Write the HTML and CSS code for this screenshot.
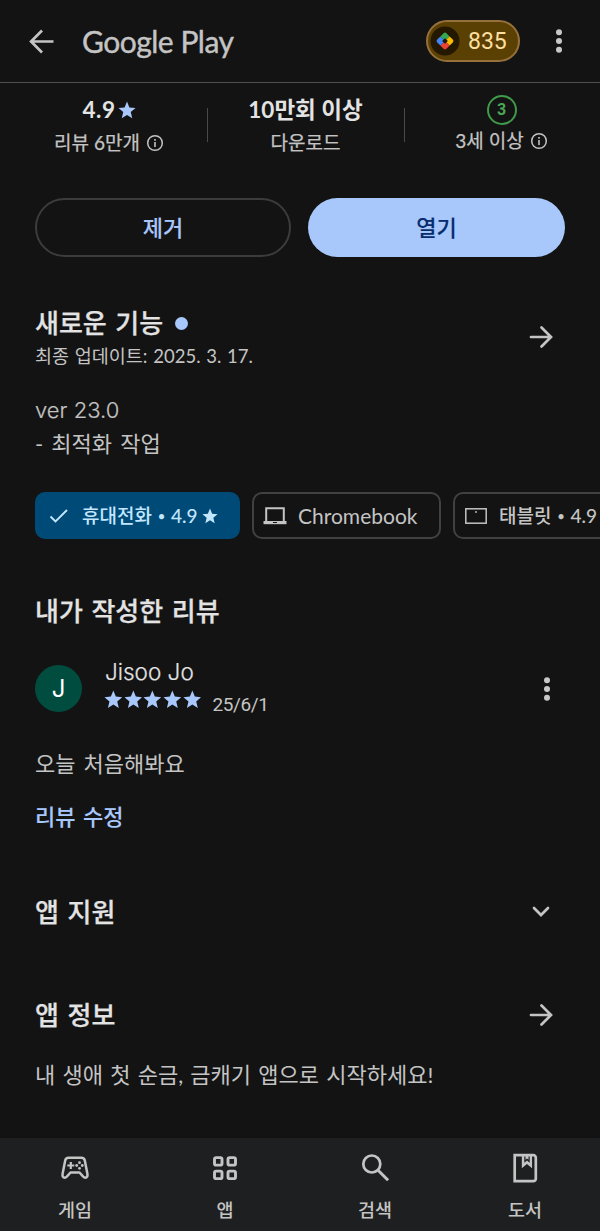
FILE: index.html
```html
<!DOCTYPE html>
<html lang="ko">
<head>
<meta charset="utf-8">
<title>Google Play</title>
<link rel="stylesheet" href="styles.css">
</head>
<body>
<svg class="defs" width="0" height="0" aria-hidden="true">
  <symbol id="star" viewBox="0 0 24 24"><path fill="currentColor" d="M12 18.500 5 23l2-8.300L.6 9.200l8.200-.7L12 .6l3.200 7.900 8.200.7-6.400 5.500L19 23z"/></symbol>
  <symbol id="info" viewBox="0 0 18 18"><circle cx="9" cy="9" r="7.3" fill="none" stroke="currentColor" stroke-width="1.5"/><path d="M9 8v5M9 5v1.7" stroke="currentColor" stroke-width="1.6"/></symbol>
  <symbol id="forward" viewBox="0 0 24 24"><path d="M2 12h19M12.500 2.500 22 12l-9.500 9.500" fill="none" stroke="currentColor" stroke-width="2.700" stroke-linecap="round" stroke-linejoin="miter"/></symbol>
  <symbol id="more" viewBox="0 0 6 24"><circle cx="3" cy="3.200" r="3"/><circle cx="3" cy="12" r="3"/><circle cx="3" cy="20.800" r="3"/></symbol>
</svg>
<div class="screen">
  <header class="topbar">
    <svg class="back" viewBox="0 0 24 24"><path d="M1.500 12H23.500M12.500 1.500 2 12l10.500 10.500" fill="none" stroke="currentColor" stroke-width="2.600"/></svg>
    <h1 class="brand">Google Play</h1>
    <div class="points">
      <svg class="points-icon" viewBox="0 0 30 30"><circle cx="15" cy="15" r="14.500" fill="#251801"/><g transform="rotate(45 15 15)"><path d="M8.500 10.500a2 2 0 0 1 2-2H15V13h-2v2H8.500z" fill="#34a853"/><path d="M15 8.500h4.500a2 2 0 0 1 2 2V15H17v-2h-2z" fill="#fbbc04"/><path d="M21.500 15v4.500a2 2 0 0 1-2 2H15V17h2v-2z" fill="#ea4335"/><path d="M15 21.500h-4.500a2 2 0 0 1-2-2V15H13v2h2z" fill="#4285f4"/><animate/></g></svg>
      <span class="points-value">835</span>
    </div>
    <svg class="more"><use href="#more"/></svg>
  </header>

  <section class="stats">
    <div class="stat">
      <div class="stat-value"><span class="rating">4.9</span><svg class="stat-star"><use href="#star"/></svg></div>
      <div class="stat-label">리뷰 6만개<svg class="info"><use href="#info"/></svg></div>
    </div>
    <div class="stat">
      <div class="stat-value">10만회 이상</div>
      <div class="stat-label">다운로드</div>
    </div>
    <div class="stat">
      <div class="stat-value"><span class="age">3</span></div>
      <div class="stat-label age-label">3세 이상<svg class="info"><use href="#info"/></svg></div>
    </div>
  </section>

  <div class="actions">
    <div class="button outlined">제거</div>
    <div class="button filled">열기</div>
  </div>

  <section class="news">
    <div class="news-head">
      <div>
        <h2 class="title">새로운 기능<span class="dot"></span></h2>
        <p class="updated">최종 업데이트: 2025. 3. 17.</p>
      </div>
      <svg class="forward"><use href="#forward"/></svg>
    </div>
    <p class="body notes"><span class="version">ver 23.0</span><br>- 최적화 작업</p>
  </section>

  <div class="chips">
    <div class="chip selected">
      <svg class="check" viewBox="0 0 20 16"><path d="m1.500 8.500 5 5L18 2" fill="none" stroke="currentColor" stroke-width="1.900"/></svg>
      <span>휴대전화</span><span class="bullet">•</span><span>4.9</span><svg class="chip-star"><use href="#star"/></svg>
    </div>
    <div class="chip laptop-chip">
      <svg class="laptop" viewBox="0 0 24 20"><path d="M3.200 15V2.200h17.600V15" fill="none" stroke="currentColor" stroke-width="2"/><path d="M.5 15h23v3.200H.5z" fill="currentColor"/><path d="M10 16.500h4" stroke="#131313"/></svg>
      <span class="chip-chrome">Chromebook</span>
    </div>
    <div class="chip tablet-chip">
      <svg class="tablet" viewBox="0 0 22 16"><rect x=".8" y=".8" width="20.400" height="14.400" fill="none" stroke="currentColor" stroke-width="1.500"/><circle cx="11" cy="4" r=".9" fill="currentColor"/></svg>
      <span>태블릿</span><span class="bullet">•</span><span>4.9</span><svg class="chip-star"><use href="#star"/></svg>
    </div>
  </div>

  <section class="review">
    <h2 class="title">내가 작성한 리뷰</h2>
    <div class="review-row">
      <div class="avatar">J</div>
      <div class="reviewer">
        <div class="name">Jisoo Jo</div>
        <div class="score">
          <svg class="star"><use href="#star"/></svg><svg class="star"><use href="#star"/></svg><svg class="star"><use href="#star"/></svg><svg class="star"><use href="#star"/></svg><svg class="star"><use href="#star"/></svg>
          <span class="review-date">25/6/1</span>
        </div>
      </div>
      <svg class="more"><use href="#more"/></svg>
    </div>
    <p class="body">오늘 처음해봐요</p>
    <div class="edit">리뷰 수정</div>
  </section>

  <section class="row support">
    <h2 class="title">앱 지원</h2>
    <svg class="chevron" viewBox="0 0 18 12"><path d="m2 2 7 7 7-7" fill="none" stroke="currentColor" stroke-width="2.700" stroke-linecap="round"/></svg>
  </section>
  <section class="row about">
    <h2 class="title">앱 정보</h2>
    <svg class="forward"><use href="#forward"/></svg>
  </section>
  <p class="body summary">내 생애 첫 순금, 금캐기 앱으로 시작하세요!</p>

  <nav class="nav">
    <div class="tab">
      <svg class="tab-icon" viewBox="0 0 32 32"><path d="M9.500 5.800h13q2.700 0 3.300 2.700l2.600 13.300q.6 3.700-2.200 3.900-1 0-2-1L20.500 20.500h-9L7.800 24.700q-1 1-2 1-2.800-.2-2.200-3.900L6.200 8.500q.6-2.700 3.300-2.700z" fill="none" stroke="currentColor" stroke-width="2.500" stroke-linejoin="round"/><path d="M8.300 13.500h7M11.800 10v7" stroke="currentColor" stroke-width="2.200"/><g fill="currentColor"><circle cx="20.500" cy="10.700" r="1.400"/><circle cx="17.700" cy="13.500" r="1.400"/><circle cx="23.300" cy="13.500" r="1.400"/><circle cx="20.500" cy="16.300" r="1.400"/></g></svg>
      <span>게임</span>
    </div>
    <div class="tab">
      <svg class="tab-icon" viewBox="0 0 32 32"><g fill="none" stroke="currentColor" stroke-width="2.900"><rect x="5.500" y="5.600" width="7.500" height="7.500" rx="1.700"/><rect x="19" y="5.600" width="7.500" height="7.500" rx="1.700"/><rect x="5.500" y="19.100" width="7.500" height="7.500" rx="1.700"/><rect x="19" y="19.100" width="7.500" height="7.500" rx="1.700"/></g></svg>
      <span>앱</span>
    </div>
    <div class="tab">
      <svg class="tab-icon" viewBox="0 0 32 32"><circle cx="12.800" cy="12" r="8.500" fill="none" stroke="currentColor" stroke-width="2.700"/><path d="m18.800 18 10.300 10.300" stroke="currentColor" stroke-width="3"/></svg>
      <span>검색</span>
    </div>
    <div class="tab">
      <svg class="tab-icon" viewBox="0 0 32 32"><path d="M5.700 3.200h18.600a2.500 2.500 0 0 1 2.500 2.500v21a2.500 2.500 0 0 1-2.500 2.500H5.700z" fill="none" stroke="currentColor" stroke-width="2.700"/><path fill="currentColor" d="M12.500 3h11v14.500L18 12.800l-5.500 4.700z" transform="translate(1.200 0) scale(.93)"/><path fill="#1e1f20" d="M15.300 4.600h1.200v3.200l1.500-1.200 1.500 1.200V4.600h1.200v6.200L18 8.600l-2.700 2.200z"/></svg>
      <span>도서</span>
    </div>
  </nav>
</div>
</body>
</html>
```
FILE: styles.css
```css
* { box-sizing: border-box; }
body { margin: 0; background: #131313; color: #c4c4c4; font-family: Lato, "Noto Sans CJK KR", sans-serif; }
h1, h2, p { margin: 0; font-weight: 400; }
svg { display: block; flex: none; }
.defs { display: none; }
.screen { width: 600px; height: 1231px; overflow: hidden; display: flex; flex-direction: column; }
.screen > * { flex: none; }

.topbar { height: 83px; border-bottom: 1px solid #505050; display: flex; align-items: center; padding: 0 38px 0 29px; }
.back { width: 25px; height: 25px; }
.brand { margin-left: 28px; font-size: 30px; line-height: 40px; letter-spacing: -.5px; font-weight: 400; -webkit-text-stroke: .4px currentColor; }
.points { margin-left: auto; width: 94px; height: 42px; border: 2px solid #96703a; border-radius: 21px; background: #5b4003; color: #fddf9f; display: flex; align-items: center; padding-left: 2px; }
.points-icon { width: 30px; height: 30px; }
.points-value { margin-left: 8px; padding-top: 2px; font-size: 23px; line-height: 30px; font-family: Roboto, sans-serif; }
.more { width: 6px; height: 24px; fill: #c8c8c8; }
.topbar .more { margin-left: 36px; }

.stats { height: 115px; padding: 10px 0 0 11px; display: grid; grid-template-columns: 196px 197px 195px; }
.stat { display: flex; flex-direction: column; align-items: center; }
.stat + .stat { background: linear-gradient(#494949, #494949) 0 15px / 1px 34px no-repeat; }
.stat-value { height: 33px; display: flex; align-items: center; color: #e3e3e3; font-size: 22.500px; line-height: 33px; font-weight: 700; }
.rating { letter-spacing: .6px; }
.stat-star { width: 18px; height: 18px; margin-left: 2px; color: #a8c7fa; }
.stat-label { height: 33px; display: flex; align-items: center; font-size: 19px; line-height: 33px; -webkit-text-stroke: .25px currentColor; }
.info { width: 18px; height: 18px; margin-left: 6px; }
.age { width: 30px; height: 30px; border: 2px solid #3f9a49; border-radius: 50%; color: #4ba653; font: 700 16px/26px Roboto, sans-serif; text-align: center; }
.age-label { height: 30px; line-height: 30px; }

.actions { display: grid; grid-template-columns: 256px 257px; gap: 17px; padding: 0 35px; height: 59px; }
.button { border-radius: 30px; display: flex; align-items: center; justify-content: center; padding-bottom: 3px; font-size: 22px; font-weight: 500; color: #a8c7fa; -webkit-text-stroke: .1px currentColor; }
.outlined { border: 2px solid #3c3c3c; }
.filled { background: #a8c7fa; color: #062e6f; }

.news { padding: 48px 47px 0 35px; height: 235px; }
.news-head { display: flex; align-items: center; justify-content: space-between; height: 66px; }
.title { font-size: 26px; line-height: 36px; font-weight: 500; color: #e3e3e3; word-spacing: 2px; -webkit-text-stroke: .25px currentColor; }
.news .title { display: flex; align-items: center; }
.dot { width: 13px; height: 13px; border-radius: 50%; background: #a8c7fa; margin-left: 12px; }
.updated { font-size: 18.500px; line-height: 30px; word-spacing: 1px; }
.forward { width: 24px; height: 24px; }
.news .forward { margin-bottom: 3px; }
.notes { margin-top: 22px; }
.version { font: 300 22px/34px Inter, sans-serif; word-spacing: 0; -webkit-text-stroke: .2px currentColor; }
.body { font-size: 22px; line-height: 34px; word-spacing: 2.500px; }

.chips { display: flex; gap: 12px; padding-left: 35px; height: 47px; overflow: hidden; }
.chip { flex: none; height: 47px; border: 2px solid #414141; border-radius: 10px; display: flex; align-items: center; font-size: 19px; line-height: 40px; font-weight: 500; white-space: nowrap; }
.selected { width: 205px; background: #004a77; border-color: #004a77; color: #c2e7ff; padding-left: 12px; }
.laptop-chip { width: 189px; padding-left: 9px; }
.tablet-chip { width: 210px; padding-left: 10px; }
.check { width: 20px; height: 16px; margin-right: 13px; }
.laptop { width: 24px; height: 20px; margin-right: 11px; }
.tablet { width: 22px; height: 16px; margin-right: 12px; }
.bullet { width: 19px; text-align: center; font-size: 13px; }
.chip-star { width: 16px; height: 16px; margin-left: 5px; }
.chip-chrome { font-size: 21px; font-weight: 400; }

.review { padding: 54px 50px 0 35px; height: 341px; }
.review-row { height: 60px; margin: 30px 0 28px; display: flex; align-items: center; }
.avatar { width: 47px; height: 47px; margin-bottom: 1px; border-radius: 50%; background: #004d40; color: #fff; font: 24px/47px Inter, sans-serif; text-align: center; }
.reviewer { flex: 1; margin-left: 22px; }
.name { font: 300 22.500px/25px Inter, sans-serif; height: 29px; padding-left: 1px; color: #e3e3e3; -webkit-text-stroke: .2px currentColor; }
.score { display: flex; height: 31px; gap: 1px; }
.star { width: 18.700px; height: 18.700px; margin-top: 2px; color: #a8c7fa; }
.review-date { margin: 5px 0 0 10px; font: 19px/24px Roboto, sans-serif; letter-spacing: -.4px; }
.edit { margin-top: 19px; font-size: 22px; line-height: 34px; font-weight: 500; word-spacing: 2px; color: #a8c7fa; -webkit-text-stroke: .1px currentColor; }

.row { height: 36px; padding: 0 47px 0 35px; display: flex; justify-content: space-between; align-items: center; }
.support { margin-top: 14px; }
.support .chevron { width: 18px; height: 12px; margin-right: 3px; }
.about { margin-top: 67px; }
.summary { padding-left: 35px; margin-top: 25px; word-spacing: 1.600px; }

.nav { height: 93px; margin-top: auto; background: #1e1f20; display: grid; grid-template-columns: repeat(4, 150px); }
.tab { display: flex; flex-direction: column; align-items: center; padding-top: 14px; font-size: 18.500px; line-height: 30px; font-weight: 500; }
.tab-icon { width: 32px; height: 32px; margin-bottom: 11px; }
```
